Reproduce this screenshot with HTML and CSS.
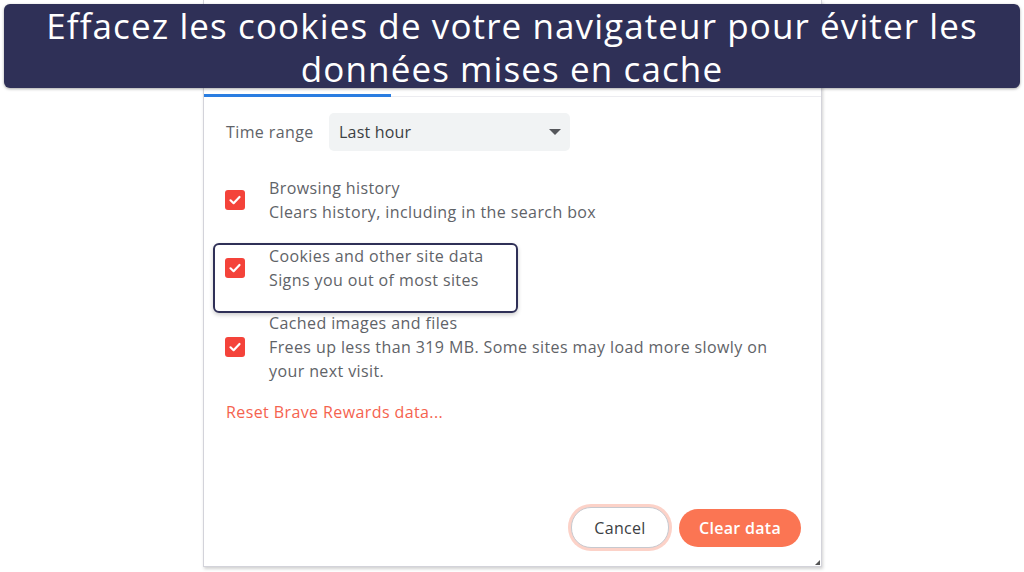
FILE: index.html
```html
<!DOCTYPE html>
<html lang="fr">
<head>
<meta charset="utf-8">
<link rel="stylesheet" href="styles.css">
</head>
<body>
<div class="banner">Effacez les cookies de votre navigateur pour éviter les<br>données mises en cache</div>
<div class="dialog">
  <div class="tabs"><div class="tab-active"></div></div>
  <div class="content">
    <div class="range-row">
      <span class="range-label">Time range</span>
      <div class="select"><span>Last hour</span><span class="caret"></span></div>
    </div>
    <div class="item item-first">
      <span class="check"><svg viewBox="0 0 20 20" width="20" height="20"><path d="M5.5 10.3 L8.6 13.2 L14.5 7" fill="none" stroke="#fff" stroke-width="2.2" stroke-linecap="round" stroke-linejoin="round"/></svg></span>
      <div class="item-text"><div>Browsing history</div><div>Clears history, including in the search box</div></div>
    </div>
    <div class="item item-mid">
      <span class="check"><svg viewBox="0 0 20 20" width="20" height="20"><path d="M5.5 10.3 L8.6 13.2 L14.5 7" fill="none" stroke="#fff" stroke-width="2.2" stroke-linecap="round" stroke-linejoin="round"/></svg></span>
      <div class="item-text"><div>Cookies and other site data</div><div>Signs you out of most sites</div></div>
      <div class="highlight"></div>
    </div>
    <div class="item item-last">
      <span class="check"><svg viewBox="0 0 20 20" width="20" height="20"><path d="M5.5 10.3 L8.6 13.2 L14.5 7" fill="none" stroke="#fff" stroke-width="2.2" stroke-linecap="round" stroke-linejoin="round"/></svg></span>
      <div class="item-text"><div>Cached images and files</div><div>Frees up less than 319 MB. Some sites may load more slowly on your next visit.</div></div>
    </div>
    <div class="reset">Reset Brave Rewards data...</div>
  </div>
  <div class="actions">
    <button class="btn btn-cancel">Cancel</button>
    <button class="btn btn-clear">Clear data</button>
  </div>
  <span class="grip"></span>
</div>
</body>
</html>
```
FILE: styles.css
```css
html, body {
  margin: 0;
  padding: 0;
  background: #ffffff;
}
body {
  width: 1024px;
  height: 572px;
  overflow: hidden;
  position: relative;
  font-family: "Open Sans", "Noto Sans", sans-serif;
}
.banner {
  position: absolute;
  left: 4px;
  top: 4px;
  width: 1016px;
  height: 84px;
  box-sizing: border-box;
  background: #2f3057;
  border-radius: 6px;
  box-shadow: 0 1px 3px rgba(0,0,0,0.35);
  color: #ffffff;
  text-align: center;
  font-family: "Open Sans", "Noto Sans", sans-serif;
  font-size: 35px;
  letter-spacing: 1.1px;
  line-height: 43px;
  padding-top: 0;
  z-index: 2;
}
.dialog {
  margin-left: 203px;
  width: 619px;
  height: 567px;
  box-sizing: border-box;
  border: 1px solid #d3d3da;
  border-top: none;
  box-shadow: 1px 2px 3px rgba(0,0,0,0.18);
  display: flex;
  flex-direction: column;
  position: relative;
  background: #fff;
}
.tabs {
  height: 97px;
  box-sizing: border-box;
  border-bottom: 1px solid #ececf0;
  position: relative;
}
.tab-active {
  position: absolute;
  left: 0;
  bottom: -1px;
  width: 187px;
  height: 3px;
  background: #2a7de1;
}
.content {
  padding-left: 22px;
  color: #5f6368;
  font-size: 16px;
  letter-spacing: 0.4px;
}
.range-row {
  display: flex;
  align-items: center;
  margin-top: 16px;
}
.range-label {
  width: 103px;
}
.select {
  width: 241px;
  height: 38px;
  box-sizing: border-box;
  background: #f1f3f4;
  border-radius: 5px;
  display: flex;
  align-items: center;
  justify-content: space-between;
  padding: 0 8px 0 10px;
  color: #3c4043;
  letter-spacing: 0.2px;
}
.caret {
  width: 0;
  height: 0;
  border-left: 6px solid transparent;
  border-right: 6px solid transparent;
  border-top: 6px solid #55575b;
  margin-right: 1px;
}
.item {
  display: flex;
  align-items: center;
  position: relative;
  line-height: 24px;
}
.item-first { margin-top: 25px; }
.item-mid { margin-top: 20px; }
.item-last { margin-top: 19px; }
.check {
  width: 20px;
  height: 20px;
  border-radius: 3px;
  background: #f4433a;
  margin-left: -1px;
  margin-right: 24px;
  flex: none;
  display: block;
}
.check svg { display: block; }
.item-text {
  width: 500px;
  line-height: 24px;
}
.highlight {
  position: absolute;
  left: -13px;
  top: -1px;
  width: 305px;
  height: 70px;
  box-sizing: border-box;
  border: 2px solid #2f3057;
  border-radius: 6px;
  box-shadow: 0 2px 4px rgba(0,0,0,0.2);
}
.reset {
  margin-top: 17px;
  line-height: 24px;
  color: #f5634f;
}
.actions {
  margin-top: auto;
  display: flex;
  justify-content: flex-end;
  align-items: center;
  gap: 10px;
  padding: 0 20px 18px 0;
}
.btn {
  font-family: "Open Sans", "Noto Sans", sans-serif;
  font-size: 16px;
  letter-spacing: 0.3px;
  border-radius: 20px;
  cursor: pointer;
}
.btn-cancel {
  width: 98px;
  height: 41px;
  background: #fff;
  color: #3c4043;
  border: 1.5px solid #c7c9cf;
  box-shadow: 0 0 0 3px #fcd2c8;
}
.btn-clear {
  width: 122px;
  height: 38px;
  background: #fb7553;
  color: #fff;
  border: none;
  font-weight: 600;
}
.grip {
  position: absolute;
  right: 1px;
  bottom: 1px;
  width: 0;
  height: 0;
  border-left: 5px solid transparent;
  border-bottom: 5px solid #555;
}
```
